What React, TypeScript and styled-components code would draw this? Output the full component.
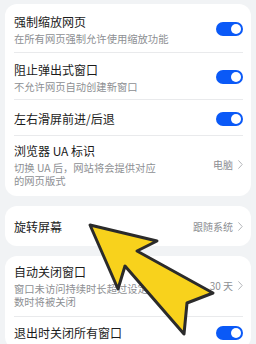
import React from "react";
import styled, { createGlobalStyle } from "styled-components";

const Global = createGlobalStyle`
  html, body { margin: 0; padding: 0; }
  body {
    background: #f1f3f5;
    font-family: "Noto Sans CJK SC", "Noto Sans", sans-serif;
    width: 256px;
    height: 344px;
    overflow: hidden;
  }
`;

const Page = styled.div`
  position: relative;
  width: 256px;
  height: 344px;
  overflow: hidden;
  padding: 4px 5px 0 5px;
  box-sizing: border-box;
  display: flex;
  flex-direction: column;
  gap: 10px;
`;

const Card = styled.div`
  background: #ffffff;
  border-radius: 12px;
  padding: 0 8px 0 9px;
  display: flex;
  flex-direction: column;
  flex-shrink: 0;
`;

const Row = styled.div<{ $pt: number; $pb: number; $gap?: number; $divider?: boolean }>`
  display: flex;
  align-items: center;
  justify-content: space-between;
  padding-top: ${(p) => p.$pt}px;
  padding-bottom: ${(p) => p.$pb}px;
  border-bottom: ${(p) => (p.$divider ? "1px solid #e9eaec" : "none")};
  --gap: ${(p) => p.$gap ?? 2}px;
`;

const Texts = styled.div`
  display: flex;
  flex-direction: column;
  min-width: 0;
`;

const Title = styled.div`
  font-size: 12px;
  line-height: 16px;
  color: #1b1b1b;
  white-space: nowrap;
`;

const Sub = styled.div<{ $width?: number }>`
  margin-top: var(--gap);
  font-size: 10.3px;
  line-height: 13px;
  color: #8d8f93;
  max-width: ${(p) => (p.$width ? `${p.$width}px` : "none")};
`;

const Switch = styled.div`
  width: 27px;
  height: 14px;
  border-radius: 7px;
  background: #0a59f7;
  position: relative;
  flex-shrink: 0;
  &::after {
    content: "";
    position: absolute;
    right: 2px;
    top: 2px;
    width: 10px;
    height: 10px;
    border-radius: 50%;
    background: #ffffff;
  }
`;

const Value = styled.div`
  display: flex;
  align-items: center;
  gap: 5px;
  font-size: 10px;
  line-height: 13px;
  color: #8d8f93;
  flex-shrink: 0;
  white-space: nowrap;
`;

const Overlay = styled.svg`
  position: absolute;
  left: 0;
  top: 0;
  pointer-events: none;
`;

const Chevron = () => (
  <svg width="5" height="9" viewBox="0 0 5 9">
    <polyline points="0.7,0.7 4.2,4.5 0.7,8.3" fill="none" stroke="#b4b6ba" strokeWidth="1" strokeLinecap="round" strokeLinejoin="round" />
  </svg>
);

export default function App() {
  return (
    <>
      <Global />
      <Page>
        <Card>
          <Row $pt={10} $pb={7} $gap={1.5} $divider>
            <Texts>
              <Title>强制缩放网页</Title>
              <Sub>在所有网页强制允许使用缩放功能</Sub>
            </Texts>
            <Switch />
          </Row>
          <Row $pt={9} $pb={6} $gap={2.5} $divider>
            <Texts>
              <Title>阻止弹出式窗口</Title>
              <Sub>不允许网页自动创建新窗口</Sub>
            </Texts>
            <Switch />
          </Row>
          <Row $pt={11} $pb={8} $divider>
            <Texts>
              <Title>左右滑屏前进/后退</Title>
            </Texts>
            <Switch />
          </Row>
          <Row $pt={7} $pb={9} $gap={1.5}>
            <Texts>
              <Title>浏览器 UA 标识</Title>
              <Sub $width={147}>切换 UA 后，网站将会提供对应的网页版式</Sub>
            </Texts>
            <Value>
              电脑
              <Chevron />
            </Value>
          </Row>
        </Card>
        <Card>
          <Row $pt={13} $pb={11}>
            <Texts>
              <Title>旋转屏幕</Title>
            </Texts>
            <Value>
              跟随系统
              <Chevron />
            </Value>
          </Row>
        </Card>
        <Card>
          <Row $pt={8} $pb={8} $gap={2.5} $divider>
            <Texts>
              <Title>自动关闭窗口</Title>
              <Sub $width={147}>窗口未访问持续时长超过设定天数时将被关闭</Sub>
            </Texts>
            <Value>
              30 天
              <Chevron />
            </Value>
          </Row>
          <Row $pt={8} $pb={8}>
            <Texts>
              <Title>退出时关闭所有窗口</Title>
            </Texts>
            <Switch />
          </Row>
        </Card>
        <Overlay width="256" height="344" viewBox="0 0 256 344">
          <polygon
            points="90,225 157,241 137,251 213,293 187,303 184,334 125,266 118,289"
            fill="#f8d21c"
            stroke="#2b2b2b"
            strokeWidth="3"
            strokeLinejoin="round"
          />
        </Overlay>
      </Page>
    </>
  );
}
